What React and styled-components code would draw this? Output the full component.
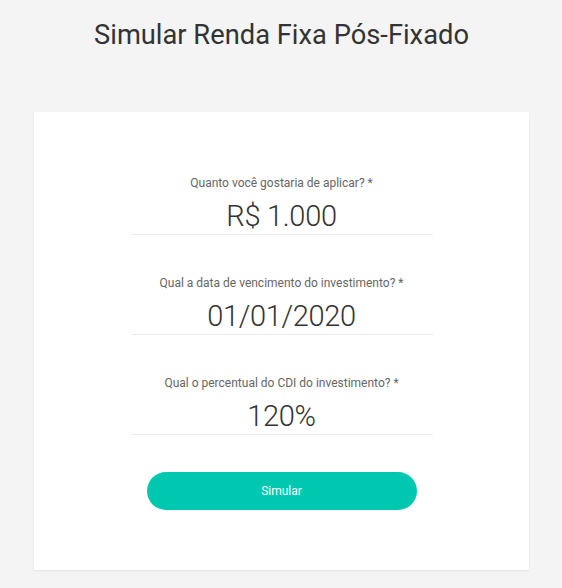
import React from "react";
import styled, { createGlobalStyle } from "styled-components";

const Global = createGlobalStyle`
  html, body { margin: 0; padding: 0; background: #f4f4f4; }
  body { font-family: Roboto, "Liberation Sans", sans-serif; color: #333; }
`;

const Page = styled.div`
  display: flex;
  flex-direction: column;
  align-items: center;
  padding: 17px 0 18px 1px;
`;

const Title = styled.h1`
  margin: 0 0 59px;
  font-size: 27.3px;
  line-height: 36px;
  font-weight: 400;
  color: #333;
`;

const Card = styled.form`
  width: 495px;
  box-sizing: border-box;
  background: #fff;
  box-shadow: 0 1px 2px rgba(0, 0, 0, 0.08);
  padding: 63px 0 60px;
  display: flex;
  flex-direction: column;
  align-items: center;
  gap: 40px;
`;

const Field = styled.div`
  width: 302px;
  display: flex;
  flex-direction: column;
  align-items: center;
  gap: 7px;
`;

const Label = styled.label`
  font-size: 12px;
  line-height: 16px;
  color: #666;
`;

const Value = styled.div`
  width: 100%;
  height: 36px;
  font-size: 29px;
  line-height: 36px;
  font-weight: 300;
  letter-spacing: -0.3px;
  color: #333;
  text-align: center;
  border-bottom: 1px solid #ebebeb;
`;

const Button = styled.button`
  margin-top: -3px;
  width: 270px;
  height: 38px;
  border: none;
  border-radius: 19px;
  background: #00c8b0;
  color: #fff;
  font-family: inherit;
  font-size: 12px;
  cursor: pointer;
`;

const fields = [
  { label: "Quanto você gostaria de aplicar? *", value: "R$ 1.000" },
  { label: "Qual a data de vencimento do investimento? *", value: "01/01/2020" },
  { label: "Qual o percentual do CDI do investimento? *", value: "120%" },
];

export default function App() {
  return (
    <>
      <Global />
      <Page>
        <Title>Simular Renda Fixa Pós-Fixado</Title>
        <Card onSubmit={(e) => e.preventDefault()}>
          {fields.map((f) => (
            <Field key={f.label}>
              <Label>{f.label}</Label>
              <Value>{f.value}</Value>
            </Field>
          ))}
          <Button type="submit">Simular</Button>
        </Card>
      </Page>
    </>
  );
}
